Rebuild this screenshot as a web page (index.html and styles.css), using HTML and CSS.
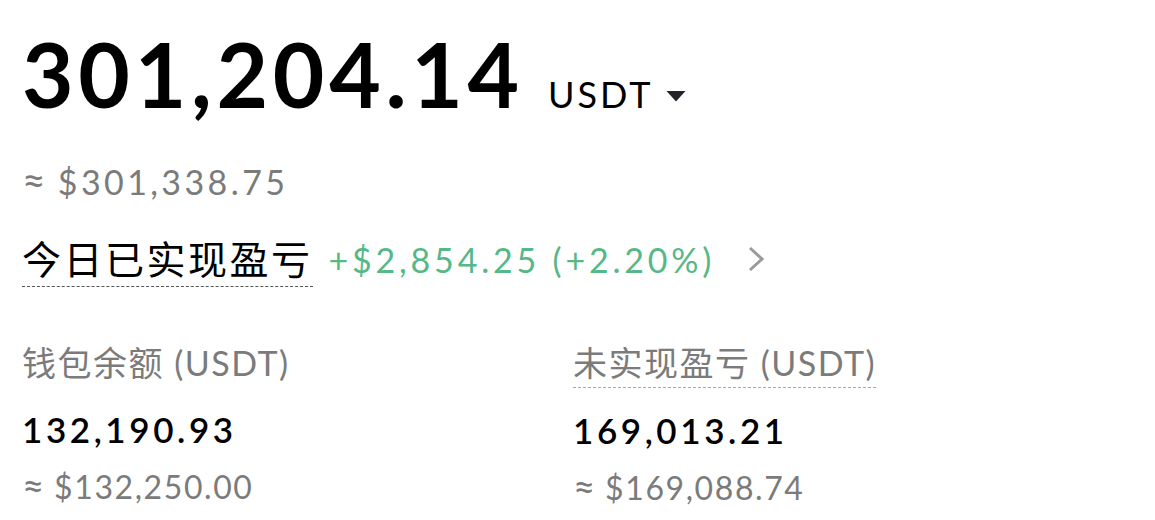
FILE: index.html
```html
<!DOCTYPE html>
<html lang="zh-CN">
<head>
  <meta charset="UTF-8">
  <meta name="viewport" content="width=device-width, initial-scale=1.0">
  <title>资产总览</title>
  <link rel="stylesheet" href="styles.css">
</head>
<body>
  <div class="overview">
    <!-- Solde total -->
    <div class="total">
      <span class="total-value">301,204.14</span>
      <span class="total-unit">
        <span>USDT</span>
        <svg class="caret" width="20" height="12" viewBox="0 0 20 12"><path d="M0.5 1 L19.5 1 L10 11.5 Z" fill="#222429"/></svg>
      </span>
    </div>
    <div class="total-fiat"><span class="approx">≈</span> $301,338.75</div>

    <div class="pnl-today">
      <span class="pnl-label">今日已实现盈亏</span>
      <span class="pnl-value">+$2,854.25 (+2.20%)</span>
      <svg class="chevron" width="18" height="26" viewBox="0 0 18 26"><path d="M3 2 L15 13 L3 24" fill="none" stroke="#9a9a9a" stroke-width="3"/></svg>
    </div>

    <!-- Détails -->
    <div class="stats">
      <div class="stat">
        <div class="stat-label">钱包余额 (USDT)</div>
        <div class="stat-value">132,190.93</div>
        <div class="stat-fiat"><span class="approx">≈</span> $132,250.00</div>
      </div>
      <div class="stat">
        <div class="stat-label dotted">未实现盈亏 (USDT)</div>
        <div class="stat-value">169,013.21</div>
        <div class="stat-fiat"><span class="approx">≈</span> $169,088.74</div>
      </div>
    </div>
  </div>
</body>
</html>
```

FILE: styles.css
```css
body {
  margin: 0;
  background: #fff;
  font-family: Lato, "Noto Sans CJK SC", sans-serif;
  color: #000;
}

.overview {
  padding: 24px 22px 0;
}

.total {
  display: flex;
  align-items: baseline;
  height: 100px;
}
.total-value {
  font-size: 89px;
  font-weight: 700;
  line-height: 100px;
  letter-spacing: 4.7px;
}
.total-unit {
  display: inline-flex;
  align-items: center;
  gap: 13px;
  font-size: 36px;
  line-height: 40px;
  margin-left: 24px;
  letter-spacing: 3px;
}
.caret {
  margin-top: 4px;
}

.approx {
  font-size: 1.2em;
  letter-spacing: 0;
  line-height: 1;
}

.total-fiat {
  margin-top: 36px;
  font-size: 34px;
  color: #7b7b7b;
  line-height: 44px;
  letter-spacing: 3.4px;
}

.pnl-today {
  display: flex;
  align-items: center;
  margin-top: 25px;
  height: 60px;
}
.pnl-label {
  font-size: 39px;
  line-height: 50px;
  letter-spacing: 2.5px;
  padding-bottom: 2px;
  margin-top: 2px;
  border-bottom: 1px dashed #555;
}
.pnl-value {
  margin-left: 16px;
  font-size: 34px;
  letter-spacing: 3.8px;
  color: #56b886;
}
.chevron {
  margin-left: 32px;
}

.stats {
  display: grid;
  grid-template-columns: 551px 1fr;
  margin-top: 52px;
}
.stat-label {
  display: inline-block;
  font-size: 34px;
  line-height: 44px;
  letter-spacing: 1.5px;
  padding-bottom: 2px;
  color: #7b7b7b;
}
.stat-label.dotted {
  border-bottom: 1px dashed #aaa;
}
.stat-value {
  margin-top: 20px;
  font-size: 35px;
  font-weight: 600;
  line-height: 44px;
  letter-spacing: 3.6px;
}
.stat-fiat {
  margin-top: 14px;
  font-size: 32px;
  line-height: 44px;
  letter-spacing: 1.6px;
  color: #7b7b7b;
}
```
